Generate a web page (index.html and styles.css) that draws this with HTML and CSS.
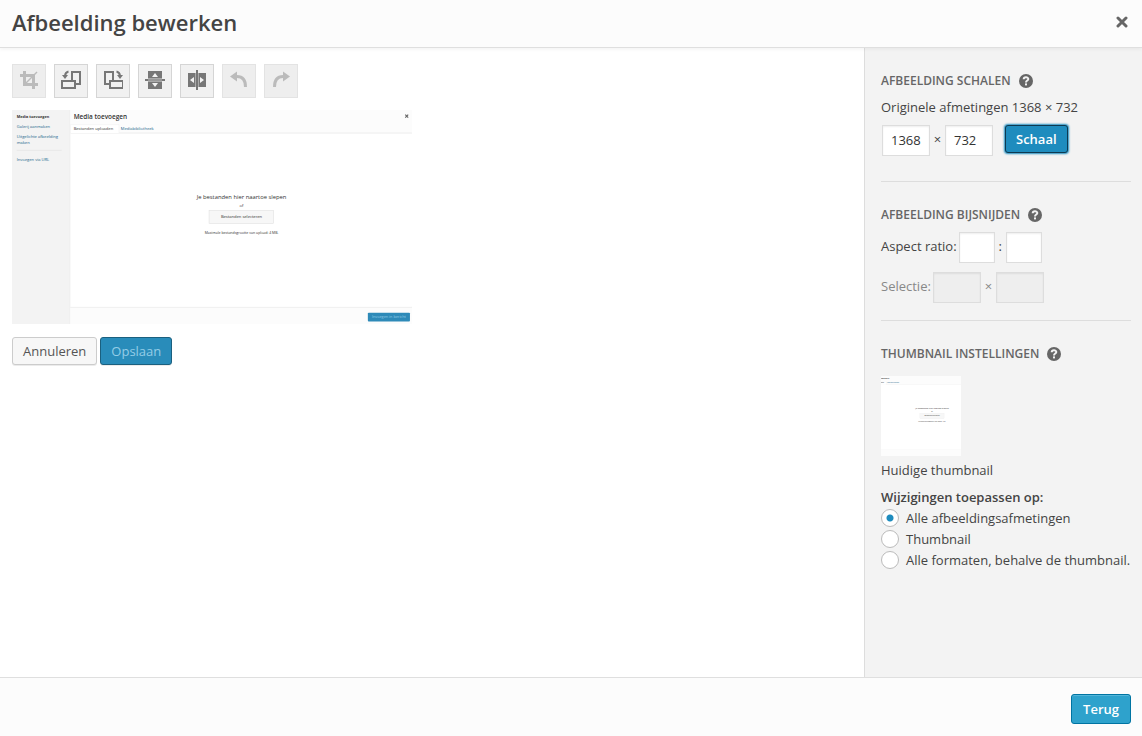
FILE: index.html
```html
<!DOCTYPE html>
<html lang="nl">
<head>
<meta charset="utf-8">
<title>Afbeelding bewerken</title>
<link rel="stylesheet" href="styles.css">
</head>
<body>
<svg class="defs" aria-hidden="true">
  <symbol id="help" viewBox="0 0 14 14">
    <circle cx="7" cy="7" r="7" fill="#666"/>
    <path d="M4.7 5.3C4.7 2.7 9.3 2.7 9.3 5.1C9.3 6.6 7 6.5 7 8.5" fill="none" stroke="#f3f3f3" stroke-width="2"/>
    <rect x="6" y="9.4" width="2" height="2" fill="#f3f3f3"/>
  </symbol>
</svg>

<header class="header">
  <h1 class="title">Afbeelding bewerken</h1>
  <button class="close" type="button" aria-label="Sluiten">
    <svg width="12" height="12" viewBox="0 0 12 12"><path d="M2 2L10 10M10 2L2 10" stroke="#666" stroke-width="3" stroke-linecap="round"/></svg>
  </button>
</header>

<div class="body">
  <main class="editor">
    <div class="toolbar">
      <button class="tool" type="button" disabled aria-label="Bijsnijden">
        <svg width="20" height="20" viewBox="0 0 20 20" fill="none" stroke="currentColor"><path d="M5.5 1V14.5H19M1 5.5H14.5V19" stroke-width="3"/><path d="M6 14L18 2" stroke-width="1.4"/></svg>
      </button>
      <button class="tool" type="button" aria-label="Linksom draaien">
        <svg width="20" height="20" viewBox="0 0 20 20" fill="none" stroke="currentColor" stroke-width="2"><path d="M11 10V2H19V14H15M1 11H14V18H1Z"/><path d="M7.5 1.5C5 2 4.2 3.5 4 6"/><path d="M1 5H7L4 9Z" fill="currentColor" stroke="none"/></svg>
      </button>
      <button class="tool" type="button" aria-label="Rechtsom draaien">
        <svg width="20" height="20" viewBox="0 0 20 20" fill="none" stroke="currentColor" stroke-width="2"><path d="M10 10V2H2V14H6M7 11H20V18H7Z"/><path d="M13.5 1.5C16 2 16.8 3.5 17 6"/><path d="M14 5H20L17 9Z" fill="currentColor" stroke="none"/></svg>
      </button>
      <button class="tool" type="button" aria-label="Verticaal spiegelen">
        <svg width="20" height="20" viewBox="0 0 20 20" fill="currentColor"><path d="M3 1H17V8H3ZM3 12H17V19H3Z"/><path d="M3 8H17V12H3Z" fill="#aaa"/><path d="M0 9H3V11H0ZM17 9H20V11H17Z"/><path d="M3 9H17V11H3Z" fill="#999"/><path d="M10 3L13 7H7ZM7 13H13L10 17Z" fill="#f3f3f3"/></svg>
      </button>
      <button class="tool" type="button" aria-label="Horizontaal spiegelen">
        <svg width="20" height="20" viewBox="0 0 20 20" fill="currentColor"><path d="M1 3H8V17H1ZM12 3H19V17H12Z"/><path d="M8 3H12V17H8Z" fill="#aaa"/><path d="M9 0H11V20H9Z"/><path d="M3 10L7 7V13ZM13 7L17 10L13 13Z" fill="#f3f3f3"/></svg>
      </button>
      <button class="tool" type="button" disabled aria-label="Ongedaan maken">
        <svg width="20" height="20" viewBox="0 0 20 20" fill="none" stroke="currentColor"><path d="M8 6.5C14 6.5 16.5 10 16.5 17" stroke-width="3"/><path d="M1 6.5L8 1.5V11.5Z" fill="currentColor" stroke="none"/></svg>
      </button>
      <button class="tool" type="button" disabled aria-label="Opnieuw">
        <svg width="20" height="20" viewBox="0 0 20 20" fill="none" stroke="currentColor"><path d="M12 6.5C6 6.5 3.5 10 3.5 17" stroke-width="3"/><path d="M19 6.5L12 1.5V11.5Z" fill="currentColor" stroke="none"/></svg>
      </button>
    </div>

    <svg class="preview" viewBox="0 0 1368 732" role="img" aria-label="Voorbeeld van de afbeelding">
      <g id="shot">
        <rect width="1368" height="732" fill="#fff"/>
        <rect width="197" height="732" fill="#f3f3f3"/>
        <path d="M198 0V732" stroke="#e4e4e4" stroke-width="2"/>
        <rect x="200" width="1168" height="78" fill="#fcfcfc"/>
        <path d="M200 79H1368M200 675H1368" stroke="#e2e2e2" stroke-width="2"/>
        <rect x="200" y="677" width="1168" height="55" fill="#fcfcfc"/>
        <path d="M200 79V50H366V79" fill="#fff" stroke="#f0f0f0" stroke-width="2"/>
        <path d="M16 138H170" stroke="#e0e0e0" stroke-width="2"/>
        <g class="shot-text">
          <text class="shot-bold" x="16" y="29">Media toevoegen</text>
          <text class="shot-link" x="16" y="62">Galerij aanmaken</text>
          <text class="shot-link" x="16" y="96">Uitgelichte afbeelding</text>
          <text class="shot-link" x="16" y="115">maken</text>
          <text class="shot-link" x="16" y="173">Invoegen via URL</text>
          <text class="shot-title" x="211" y="31">Media toevoegen</text>
          <text x="211" y="68">Bestanden uploaden</text>
          <text class="shot-link" x="372" y="68">Mediabibliotheek</text>
        </g>
        <g class="shot-text shot-center">
          <text class="shot-drop" x="785" y="304">Je bestanden hier naartoe slepen</text>
          <text x="785" y="331">of</text>
          <rect x="674" y="343" width="221" height="45" fill="#f7f7f7" stroke="#e0e0e0" stroke-width="2"/>
          <text x="785" y="370">Bestanden selecteren</text>
          <text class="shot-small" x="785" y="425">Maximale bestandsgrootte van upload: 4 MB.</text>
          <rect x="1217" y="693" width="144" height="30" rx="3" fill="#2e8ab8"/>
          <text class="shot-action" x="1289" y="713">Invoegen in bericht</text>
        </g>
        <path d="M1345 16L1355 26M1355 16L1345 26" stroke="#666" stroke-width="4"/>
      </g>
    </svg>

    <div class="actions">
      <button class="button" type="button">Annuleren</button>
      <button class="button button-saving" type="button" disabled>Opslaan</button>
    </div>
  </main>

  <aside class="settings">
    <section class="group">
      <h2 class="group-title">Afbeelding schalen <svg class="help" width="14" height="14"><use href="#help"/></svg></h2>
      <p class="text">Originele afmetingen 1368 × 732</p>
      <div class="fields fields-scale">
        <input class="number" type="text" value="1368" aria-label="Breedte">
        <span class="sep">×</span>
        <input class="number" type="text" value="732" aria-label="Hoogte">
        <button class="button button-primary button-focus" type="button">Schaal</button>
      </div>
    </section>

    <section class="group">
      <h2 class="group-title">Afbeelding bijsnijden <svg class="help" width="14" height="14"><use href="#help"/></svg></h2>
      <div class="fields fields-ratio">
        <label class="field-label" for="ratio-w">Aspect ratio:</label>
        <input class="number number-short" id="ratio-w" type="text">
        <span class="sep">:</span>
        <input class="number number-short" type="text" aria-label="Aspect ratio hoogte">
      </div>
      <div class="fields fields-selection">
        <label class="field-label" for="sel-w">Selectie:</label>
        <input class="number" id="sel-w" type="text" disabled>
        <span class="sep">×</span>
        <input class="number" type="text" disabled aria-label="Selectie hoogte">
      </div>
    </section>

    <section class="group">
      <h2 class="group-title">Thumbnail instellingen <svg class="help" width="14" height="14"><use href="#help"/></svg></h2>
      <svg class="thumb" viewBox="318 0 732 732" role="img" aria-label="Thumbnail"><use href="#shot"/></svg>
      <p class="text">Huidige thumbnail</p>
      <fieldset class="targets">
        <legend class="legend">Wijzigingen toepassen op:</legend>
        <label class="target"><input class="radio" type="radio" name="target" checked>Alle afbeeldingsafmetingen</label>
        <label class="target"><input class="radio" type="radio" name="target">Thumbnail</label>
        <label class="target"><input class="radio" type="radio" name="target">Alle formaten, behalve de thumbnail.</label>
      </fieldset>
    </section>
  </aside>
</div>

<footer class="footer">
  <button class="button button-primary button-large" type="button">Terug</button>
</footer>
</body>
</html>
```

FILE: styles.css
```css
* {
  box-sizing: border-box;
}

body {
  display: flex;
  flex-direction: column;
  min-height: 100vh;
  margin: 0;
  background: #fff;
  color: #444;
  font: 13px/20px "Open Sans", sans-serif;
}

button,
input {
  font: inherit;
  margin: 0;
}

.defs {
  display: none;
}

.header {
  display: flex;
  align-items: center;
  justify-content: space-between;
  padding: 0 14px 2px 12px;
  border-bottom: 1px solid #dfdfdf;
  background: #fcfcfc;
  box-shadow: 0 2px 3px rgba(0, 0, 0, 0.04);
  z-index: 1;
}

.title {
  margin: 0;
  font-size: 22px;
  font-weight: 600;
  line-height: 45px;
}

.close {
  display: flex;
  padding: 0 0 1px;
  border: 0;
  background: none;
}

.body {
  display: flex;
  flex: 1;
}

.editor {
  flex: 1;
  padding: 16px 12px;
}

.toolbar {
  display: flex;
  gap: 8px;
}

.tool {
  display: flex;
  align-items: center;
  justify-content: center;
  width: 34px;
  height: 34px;
  padding: 0 0 2px;
  border: 1px solid #d5d5d5;
  background: #f1f1f1;
  color: #777;
}

.tool:disabled {
  border-color: #e3e3e3;
  background: #eee;
  color: #bbb;
}

.preview {
  display: block;
  width: 400px;
  max-width: 100%;
  margin: 12px 0 13px;
}

.shot-text {
  font-size: 14px;
  fill: #333;
}

.shot-center {
  text-anchor: middle;
}

.shot-bold {
  font-size: 13px;
  font-weight: 700;
}

.shot-link {
  fill: #21658b;
}

.shot-title {
  font-size: 22px;
  font-weight: 600;
}

.shot-drop {
  font-size: 20px;
}

.shot-small {
  font-size: 12px;
}

.shot-action {
  font-size: 13px;
  fill: #94cde7;
}

.actions {
  display: flex;
  gap: 3px;
}

.button {
  height: 28px;
  padding: 0 10px;
  border: 1px solid #ccc;
  border-radius: 3px;
  background: #f7f7f7;
  box-shadow: 0 1px 0 rgba(0, 0, 0, 0.08);
  color: #555;
  line-height: 26px;
}

.button-saving {
  border-color: #1b607f;
  background: #298cba;
  color: #94cde7;
}

.button-primary {
  border-color: #0074a2;
  background: #2ea2cc;
  box-shadow: inset 0 1px 0 rgba(120, 200, 230, 0.5);
  color: #fff;
  font-weight: 600;
}

.button-focus {
  margin: 0 0 3px 12px;
  border-color: #0e3950;
  background: #1e8cbe;
  box-shadow: 0 0 2px 1px #1e8cbe;
}

.button-large {
  height: 30px;
  padding: 0 11px;
  line-height: 28px;
}

.settings {
  width: 278px;
  padding: 24px 11px 24px 16px;
  border-left: 1px solid #ddd;
  background: #f3f3f3;
}

.group + .group {
  margin-top: 17px;
  padding-top: 24px;
  border-top: 1px solid #ddd;
}

.group:nth-child(2) {
  margin-top: 25px;
}

.group-title {
  display: flex;
  align-items: center;
  gap: 8px;
  margin: 0;
  color: #666;
  font-size: 12px;
  font-weight: 600;
  line-height: 18px;
  text-transform: uppercase;
}

.help {
  margin-bottom: 1px;
}

.text {
  margin: 0;
}

.group-title + .text {
  margin-top: 7px;
}

.fields {
  display: flex;
  align-items: center;
}

.fields-scale {
  padding-left: 1px;
  margin-top: 8px;
}

.fields-ratio {
  margin-top: 8px;
}

.fields-selection {
  margin-top: 9px;
  color: #888;
}

.field-label {
  margin: 0 2px 3px 0;
}

.number {
  width: 48px;
  height: 31px;
  padding: 2px 8px 4px;
  border: 1px solid #ddd;
  background: #fff;
  box-shadow: inset 0 1px 2px rgba(0, 0, 0, 0.07);
  color: #333;
}

.number:disabled {
  background: #eee;
}

.number-short {
  width: 36px;
}

.sep {
  width: 15px;
  padding-bottom: 3px;
  text-align: center;
}

.number-short + .sep {
  width: 11px;
}

.thumb {
  display: block;
  width: 80px;
  height: 80px;
  margin: 13px 0 4px;
}

.targets {
  margin: 7px 0 0;
  padding: 0;
  border: 0;
}

.legend {
  padding: 0;
  font-weight: 600;
}

.target {
  display: flex;
  align-items: center;
  gap: 7px;
  height: 21px;
  white-space: nowrap;
}

.radio {
  flex: none;
  appearance: none;
  width: 18px;
  height: 18px;
  border: 1px solid #bbb;
  border-radius: 50%;
  background: #fff;
}

.radio:checked {
  background: radial-gradient(circle, #1e8cbe 3px, #fff 4px);
}

.footer {
  display: flex;
  justify-content: flex-end;
  padding: 16px 11px 12px;
  border-top: 1px solid #dfdfdf;
  background: #fcfcfc;
}
```
